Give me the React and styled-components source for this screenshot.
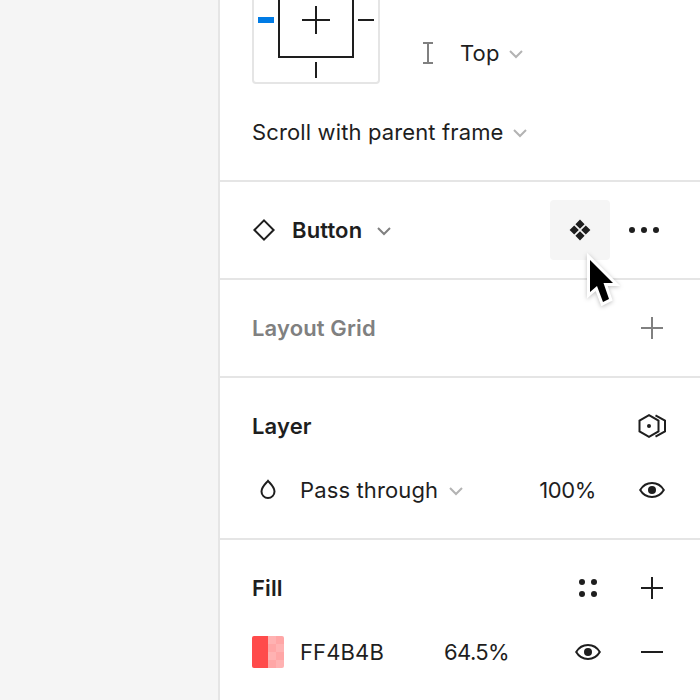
import React from "react";
import styled, { createGlobalStyle } from "styled-components";

const Global = createGlobalStyle`
  html, body { margin: 0; padding: 0; background: #f5f5f5; }
  body { width: 700px; height: 700px; overflow: hidden; font-family: Inter, "Liberation Sans", sans-serif; color: #1e1e1e; }
`;
const Page = styled.div`display: flex; justify-content: flex-end; width: 700px; height: 700px; overflow: hidden; background: #f5f5f5;`;
const Panel = styled.div`width: 482px; height: 700px; box-sizing: border-box; background: #fff; border-left: 2px solid #e5e5e5; overflow: hidden; position: relative;`;
const Section = styled.section`
  box-sizing: border-box; height: ${p => p.$h}px; padding: 0 32px; border-bottom: ${p => (p.$last ? "0" : "2px solid #e5e5e5")};
`;
const ConstraintSection = styled(Section)`display: flex; flex-direction: column; margin-top: -44px; height: 226px;`;
const ConstraintRow = styled.div`display: flex; align-items: center;`;
const ConstraintBox = styled.div`box-sizing: border-box; width: 128px; height: 128px; border: 2px solid #e5e5e5; border-radius: 4px; flex: none;`;
const VAlign = styled.div`display: flex; align-items: center; margin-left: 43px; margin-top: 66px;`;
const Row = styled.div`display: flex; align-items: center; height: ${p => p.$h || 64}px;`;
const Label = styled.span`font-size: 22px; line-height: 32px; letter-spacing: ${p => p.$ls ?? 0.13}px; color: ${p => p.$c || "#1e1e1e"}; font-weight: ${p => p.$w || 400}; white-space: nowrap; margin-left: ${p => p.$ml || 0}px;`;
const Spacer = styled.div`flex: 1;`;
const ScrollRow = styled.div`display: flex; align-items: center; margin-top: 32px;`;
const HoverBtn = styled.div`width: 60px; height: 60px; border-radius: 4px; background: #f5f5f5; display: flex; align-items: center; justify-content: center;`;
const IconSlot = styled.div`display: flex; flex: none; margin-left: ${p => p.$ml || 0}px; margin-right: ${p => p.$mr || 0}px;`;
const Cursor = styled.svg`position: absolute; left: 360px; top: 250px; filter: drop-shadow(0 1px 2px rgba(0, 0, 0, 0.25));`;
const Swatch = styled.div`width: 32px; height: 32px; border-radius: 2px; overflow: hidden; display: flex; flex: none;`;
const SwatchSolid = styled.div`width: 16px; background: #ff4b4b;`;
const SwatchAlpha = styled.div`
  width: 16px;
  background: conic-gradient(#ffa6a6 25%, #ffb2b2 0 50%, #ffa6a6 0 75%, #ffb2b2 0) 0 0 / 16px 16px;
`;

const Chevron = ({ c = "#b3b3b3", mt = 0 }) => (
  <svg width="14" height="10" viewBox="0 0 14 10" style={{ marginTop: mt }}>
    <path d="M1 2l6 6 6-6" fill="none" stroke={c} strokeWidth="2" />
  </svg>
);
const Plus = ({ c = "#1e1e1e" }) => (
  <svg width="24" height="24" viewBox="0 0 24 24"><path d="M12 1v22M1 12h22" stroke={c} strokeWidth="2" /></svg>
);
const Minus = () => (
  <svg width="24" height="24" viewBox="0 0 24 24"><path d="M1 12h22" stroke="#1e1e1e" strokeWidth="2" /></svg>
);
const Eye = () => (
  <svg width="26" height="16" viewBox="0 0 26 16">
    <path d="M1.200 8C3.800 3.600 8 1 13 1s9.200 2.600 11.800 7C22.200 12.400 18 15 13 15S3.800 12.400 1.200 8z" fill="none" stroke="#1e1e1e" strokeWidth="2" />
    <circle cx="13" cy="8" r="4" fill="#1e1e1e" />
  </svg>
);

export default function App() {
  return (
    <Page>
      <Global />
      <Panel>
        <ConstraintSection $h={226}>
          <ConstraintRow>
            <ConstraintBox>
              <svg width="124" height="124" viewBox="0 0 124 124">
                <rect x="25" y="20" width="74" height="79" fill="none" stroke="#1e1e1e" strokeWidth="2" />
                <path d="M48 62h28M62 48v28" stroke="#1e1e1e" strokeWidth="2" />
                <path d="M4 62h16" stroke="#007be5" strokeWidth="6" />
                <path d="M104 62h16M62 104v16" stroke="#1e1e1e" strokeWidth="2" />
              </svg>
            </ConstraintBox>
            <VAlign>
              <svg width="10" height="22" viewBox="0 0 10 22">
                <path d="M0 1h10M0 21h10M5 1v20" stroke="#808080" strokeWidth="2" />
              </svg>
              <Label $ml={27}>Top</Label>
              <IconSlot $ml={9}><Chevron mt={2} /></IconSlot>
            </VAlign>
          </ConstraintRow>
          <ScrollRow>
            <Label>Scroll with parent frame</Label>
            <IconSlot $ml={9}><Chevron mt={2} /></IconSlot>
          </ScrollRow>
        </ConstraintSection>

        <Section $h={98}>
          <Row $h={96}>
            <svg width="24" height="24" viewBox="0 0 24 24">
              <path d="M12 2.400L21.600 12 12 21.600 2.400 12z" fill="none" stroke="#1e1e1e" strokeWidth="2" />
            </svg>
            <Label $w={600} $ml={16}>Button</Label>
            <IconSlot $ml={15}><Chevron c="#808080" mt={2} /></IconSlot>
            <Spacer />
            <HoverBtn>
              <svg width="22" height="22" viewBox="0 0 22 22" fill="#1e1e1e">
                <path d="M11 .6l4.600 4.600L11 9.800 6.400 5.200zM5.200 6.400L9.800 11l-4.600 4.600L.6 11zM16.800 6.400l4.600 4.600-4.600 4.600-4.600-4.600zM11 12.200l4.600 4.600-4.600 4.600-4.600-4.600z" />
              </svg>
            </HoverBtn>
            <IconSlot $ml={19} $mr={9}>
              <svg width="30" height="6" viewBox="0 0 30 6" fill="#1e1e1e">
                <circle cx="3" cy="3" r="3" /><circle cx="15" cy="3" r="3" /><circle cx="27" cy="3" r="3" />
              </svg>
            </IconSlot>
          </Row>
        </Section>

        <Section $h={98}>
          <Row $h={96}>
            <Label $w={600} $c="#808080">Layout Grid</Label>
            <Spacer />
            <IconSlot $mr={4}><Plus c="#808080" /></IconSlot>
          </Row>
        </Section>

        <Section $h={162}>
          <Row $h={96}>
            <Label $w={600}>Layer</Label>
            <Spacer />
            <IconSlot $mr={2}>
              <svg width="28" height="24" viewBox="0 0 28 24">
                <path d="M11 1.200l9.500 5.500v10.600L11 22.800 1.500 17.300V6.700z" fill="none" stroke="#1e1e1e" strokeWidth="2" />
                <path d="M17.500 1.400L27 6.700v10.600l-9.500 5.300" fill="none" stroke="#1e1e1e" strokeWidth="2" />
                <circle cx="11" cy="12" r="2" fill="#1e1e1e" />
              </svg>
            </IconSlot>
          </Row>
          <Row $h={32}>
            <svg width="32" height="24" viewBox="0 0 32 24" style={{ flex: "none" }}>
              <path d="M16 2.800c2.300 2.700 6.500 6 6.500 10.700a6.500 6.500 0 0 1-13 0c0-4.700 4.200-8 6.500-10.700z" fill="none" stroke="#1e1e1e" strokeWidth="2" />
            </svg>
            <Label $ml={16}>Pass through</Label>
            <IconSlot $ml={11}><Chevron mt={2} /></IconSlot>
            <Spacer />
            <Label $ls={-0.4}>100%</Label>
            <IconSlot $ml={43} $mr={3}><Eye /></IconSlot>
          </Row>
        </Section>

        <Section $h={160} $last>
          <Row $h={96}>
            <Label $w={600}>Fill</Label>
            <Spacer />
            <IconSlot>
              <svg width="20" height="20" viewBox="0 0 20 20" fill="#1e1e1e">
                <circle cx="4" cy="4" r="3" /><circle cx="16" cy="4" r="3" /><circle cx="4" cy="16" r="3" /><circle cx="16" cy="16" r="3" />
              </svg>
            </IconSlot>
            <IconSlot $ml={42} $mr={4}><Plus /></IconSlot>
          </Row>
          <Row $h={32}>
            <Swatch><SwatchSolid /><SwatchAlpha /></Swatch>
            <Label $ml={16}>FF4B4B</Label>
            <Label $ml={60} $ls={-0.6}>64.5%</Label>
            <Spacer />
            <IconSlot><Eye /></IconSlot>
            <IconSlot $ml={39} $mr={4}><Minus /></IconSlot>
          </Row>
        </Section>

        <Cursor width="46" height="60" viewBox="0 0 46 60">
          <path d="M10 10v32l7-6 6 16 6-3-5.500-16H33z" fill="#000" stroke="#fff" strokeWidth="6" strokeLinejoin="miter" strokeMiterlimit="8" paintOrder="stroke" />
        </Cursor>
      </Panel>
    </Page>
  );
}
